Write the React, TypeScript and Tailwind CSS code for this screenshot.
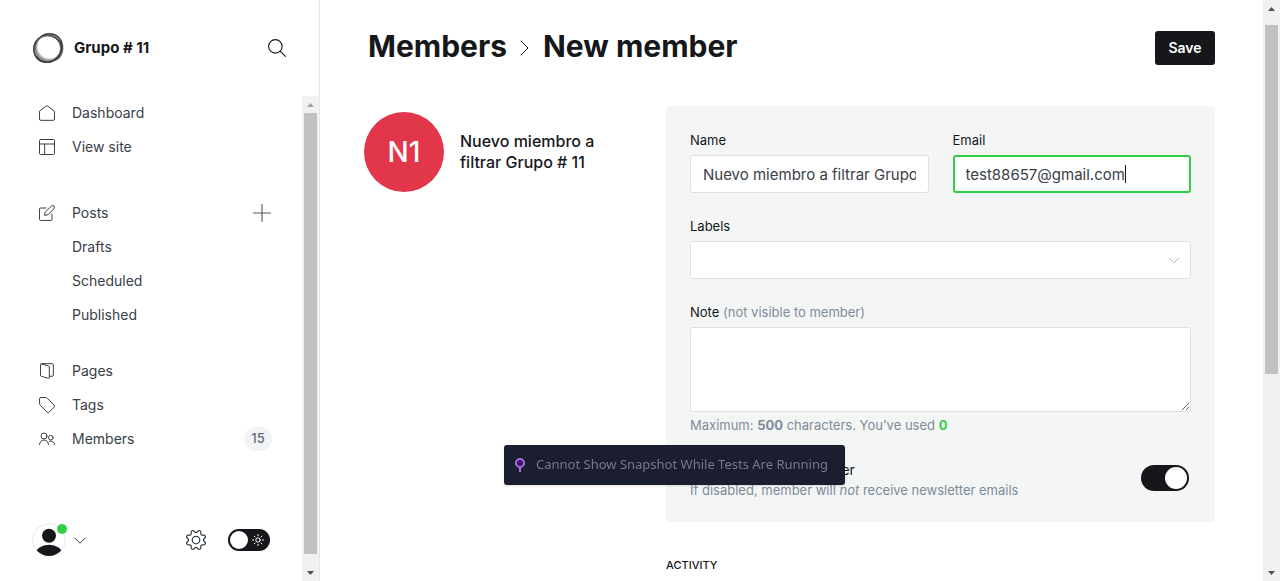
import React, { useEffect, useRef } from 'react';

type IconProps = { className?: string; children: React.ReactNode };

function Icon({ className = '', children }: IconProps) {
  return (
    <svg
      viewBox="0 0 24 24"
      fill="none"
      stroke="currentColor"
      strokeWidth="1.5"
      strokeLinecap="round"
      strokeLinejoin="round"
      aria-hidden="true"
      className={`shrink-0 ${className}`}
    >
      {children}
    </svg>
  );
}

const icons = {
  home: <path d="M.8 9.6V21a2 2 0 0 0 2 2h18.400a2 2 0 0 0 2-2V9.600L13.200 1.700a2 2 0 0 0-2.400 0z" />,
  layout: (
    <>
      <rect x=".75" y=".75" width="22.500" height="22.500" rx="1.500" />
      <path d="M.75 7.500h22.500M8.500 7.500v15.700" />
    </>
  ),
  pen: (
    <>
      <path d="M19.500 13.500v8.200a1.500 1.500 0 0 1-1.500 1.500H2.300a1.500 1.500 0 0 1-1.500-1.500V6a1.500 1.500 0 0 1 1.500-1.500h8.200" />
      <path d="M13.200 14.600 8.300 15.700l1-5L18.600 1.600a2.700 2.700 0 0 1 3.900 3.900z" />
    </>
  ),
  pages: (
    <path d="m3.400 1.300 11 3.200a1.500 1.500 0 0 1 1.100 1.500v15.700a1.200 1.200 0 0 1-1.600 1.200L3.500 20a1.500 1.500 0 0 1-1.200-1.500V2.500A1.500 1.500 0 0 1 3.800 1h16a1.700 1.700 0 0 1 1.700 1.700v15.500a1.700 1.700 0 0 1-1.700 1.700h-4.200" />
  ),
  tag: <path d="M2.300.75h7.800a3 3 0 0 1 2.100.9l10.400 10.400a2.200 2.200 0 0 1 0 3.200l-7.300 7.300a2.200 2.200 0 0 1-3.200 0L1.700 12.200a3 3 0 0 1-.9-2.100V2.300A1.500 1.500 0 0 1 2.300.75z" />,
  members: (
    <>
      <circle cx="7.500" cy="7.500" r="4.500" />
      <path d="M.75 20.300a6.750 6.750 0 0 1 13.500 0" />
      <circle cx="17.700" cy="10.100" r="3.400" />
      <path d="M15.800 15.400a5.250 5.250 0 0 1 7.500 4.900" />
    </>
  ),
};

function NavItem({ icon, label, children }: { icon?: React.ReactNode; label: string; children?: React.ReactNode }) {
  return (
    <li className="flex h-[34px] items-center justify-between">
      <a href="#" className="flex items-center text-sm text-[#394047]">
        <span className="flex w-[33px]">{icon && <Icon className="size-4">{icon}</Icon>}</span>
        {label}
      </a>
      {children}
    </li>
  );
}

function Arrow({ up, className }: { up?: boolean; className: string }) {
  return (
    <span className={`flex h-[17px] shrink-0 items-center justify-center ${className}`}>
      <svg viewBox="0 0 7 4" className="h-1 w-[7px]" fill="currentColor" aria-hidden="true">
        <path d={up ? 'M0 4 3.500 0 7 4z' : 'M0 0h7L3.500 4z'} />
      </svg>
    </span>
  );
}

function Logo() {
  return (
    <svg viewBox="0 0 32 32" className="size-8 shrink-0" fill="none" aria-hidden="true">
      <ellipse cx="17.400" cy="14.800" rx="13" ry="13" stroke="#b5b5b5" strokeWidth="2" />
      <ellipse cx="15.600" cy="16.800" rx="13.800" ry="13.400" stroke="#2b2b2b" strokeWidth="1.500" />
      <ellipse cx="17" cy="15.600" rx="14" ry="13" stroke="#666" strokeWidth="1" transform="rotate(30 16 16)" />
      <ellipse cx="16" cy="16" rx="15" ry="13.100" stroke="#3a3a3a" strokeWidth="1.300" transform="rotate(-48 16 16)" />
      <ellipse cx="15.400" cy="16.300" rx="13.200" ry="12.800" stroke="#666" strokeWidth=".9" />
    </svg>
  );
}

function Sidebar() {
  return (
    <aside className="flex w-80 shrink-0 flex-col border-r border-[#e5e7e9]">
      <div className="flex h-24 shrink-0 items-center justify-between pr-8 pl-8">
        <a href="#" className="flex items-center gap-2.5 text-[15px] font-bold text-[#15171a]">
          <Logo />
          Grupo # 11
        </a>
        <button type="button" aria-label="Search" className="mr-px">
          <Icon className="size-[18px] text-[#15171a]">
            <circle cx="9.800" cy="9.800" r="9" />
            <path d="m16.200 16.200 7 7" />
          </Icon>
        </button>
      </div>
      <div className="flex min-h-0 flex-1">
        <div className="flex min-w-0 flex-1 flex-col justify-between">
          <nav className="pr-[30px] pl-[39px]">
            <ul className="mb-8">
              <NavItem icon={icons.home} label="Dashboard" />
              <NavItem icon={icons.layout} label="View site" />
            </ul>
            <ul className="mb-[22px]">
              <NavItem icon={icons.pen} label="Posts">
                <button type="button" aria-label="New post" className="mr-px">
                  <Icon className="size-[18px] text-[#54595f]">
                    <path d="M12 .7v22.600M.7 12h22.600" />
                  </Icon>
                </button>
              </NavItem>
              <NavItem label="Drafts" />
              <NavItem label="Scheduled" />
              <NavItem label="Published" />
            </ul>
            <ul>
              <NavItem icon={icons.pages} label="Pages" />
              <NavItem icon={icons.tag} label="Tags" />
              <NavItem icon={icons.members} label="Members">
                <span className="flex h-6 w-7 items-center justify-center rounded-full bg-[#f1f3f4] text-[13px] font-medium text-[#626d79]">
                  15
                </span>
              </NavItem>
            </ul>
          </nav>
          <div className="flex items-center justify-between pr-8 pb-6 pl-8">
            <button type="button" aria-label="Account menu" className="flex items-center gap-2">
              <span className="relative">
                <svg viewBox="0 0 34 34" className="size-[34px]" aria-hidden="true">
                  <clipPath id="avatar">
                    <circle cx="17" cy="17" r="16" />
                  </clipPath>
                  <circle cx="17" cy="17" r="16.400" fill="#fff" stroke="#e9ebed" strokeWidth="1" />
                  <g clipPath="url(#avatar)" fill="#15171a">
                    <circle cx="17" cy="12.800" r="7" />
                    <ellipse cx="17" cy="31" rx="13.500" ry="9.300" />
                  </g>
                </svg>
                <span className="absolute top-px -right-px size-2.5 rounded-full bg-[#30cf43]" />
              </span>
              <svg viewBox="0 0 12 7" className="h-[7px] w-3 text-[#394047]" fill="none" stroke="currentColor" aria-hidden="true">
                <path d="m.5.700 5.500 5.500L11.500.7" />
              </svg>
            </button>
            <div className="flex items-center gap-[22px]">
              <button type="button" aria-label="Settings">
                <Icon className="size-5 text-[#394047]">
                  <circle cx="12" cy="12" r="4.500" />
                  <path d="M10.546,2.438a1.957,1.957,0,0,0,2.908,0L14.4,1.4a1.959,1.959,0,0,1,3.41,1.413l-.071,1.4A1.958,1.958,0,0,0,19.79,6.27l1.4-.071A1.959,1.959,0,0,1,22.6,9.608l-1.041.938a1.959,1.959,0,0,0,0,2.908l1.041.94a1.959,1.959,0,0,1-1.413,3.41l-1.4-.071a1.958,1.958,0,0,0-2.056,2.056l.071,1.4A1.959,1.959,0,0,1,14.4,22.6l-.941-1.041a1.959,1.959,0,0,0-2.908,0L9.606,22.6A1.959,1.959,0,0,1,6.2,21.192l.072-1.4a1.958,1.958,0,0,0-2.056-2.056l-1.4.071A1.958,1.958,0,0,1,1.4,14.4l1.041-.94a1.959,1.959,0,0,0,0-2.908L1.4,9.606A1.958,1.958,0,0,1,2.809,6.2l1.4.071A1.958,1.958,0,0,0,6.264,4.211L6.192,2.809A1.959,1.959,0,0,1,9.6,1.4Z" />
                </Icon>
              </button>
              <label className="flex h-[22px] w-[42px] items-center justify-between rounded-full bg-[#15171a] pr-1.5 pl-0.5">
                <input type="checkbox" aria-label="Dark mode" className="sr-only" />
                <span className="size-[18px] rounded-full bg-white" />
                <svg viewBox="0 0 12 12" className="size-3" fill="none" stroke="#fff" strokeLinecap="round" aria-hidden="true">
                  <circle cx="6" cy="6" r="2.200" />
                  <path d="M6 .5v1.200M6 10.300v1.200M.5 6h1.200M10.300 6h1.200M2.100 2.100l.9.900M9 9l.9.900M2.100 9.900 3 9M9 3l.9-.9" />
                </svg>
              </label>
            </div>
          </div>
        </div>
        <div className="flex w-[17px] flex-col bg-[#f1f1f1]" aria-hidden="true">
          <Arrow up className="text-[#a3a3a3]" />
          <div className="flex flex-1 flex-col px-0.5">
            <div className="grow-[441] bg-[#c1c1c1]" />
            <div className="grow-[10]" />
          </div>
          <Arrow className="text-[#505050]" />
        </div>
      </div>
    </aside>
  );
}

const labelClass = 'mb-1 block text-[13px] leading-[21px] text-[#15171a]';
const fieldClass = 'block h-[38px] w-full rounded-[3px] border bg-white px-3 text-[15px] text-[#394047] outline-none';

function MemberForm() {
  const email = useRef<HTMLInputElement>(null);
  useEffect(() => {
    const field = email.current;
    if (!field) return;
    field.focus();
    field.setSelectionRange(field.value.length, field.value.length);
  }, []);

  return (
    <form className="flex flex-col gap-[23px] rounded-[3px] bg-[#f4f6f6] px-6 pt-6 pb-[21px]">
      <div className="grid grid-cols-2 gap-6">
        <div>
          <label htmlFor="name" className={labelClass}>Name</label>
          <input id="name" defaultValue="Nuevo miembro a filtrar Grupo # 11" className={`${fieldClass} border-[#dde1e3]`} />
        </div>
        <div>
          <label htmlFor="email" className={labelClass}>Email</label>
          <div className="relative">
            <input
              id="email"
              ref={email}
              defaultValue="test88657@gmail.com"
              className={`${fieldClass} border-[#dde1e3] caret-transparent focus:border-2 focus:border-[#30cf43] focus:px-[11px]`}
            />
            <span className="pointer-events-none absolute top-2.5 left-[172px] h-[18px] w-px bg-[#15171a]" />
          </div>
        </div>
      </div>
      <div>
        <label htmlFor="labels" className={labelClass}>Labels</label>
        <div className="relative">
          <select id="labels" defaultValue="" className={`${fieldClass} appearance-none border-[#dde1e3]`}>
            <option value="" />
          </select>
          <svg viewBox="0 0 12 7" className="pointer-events-none absolute top-4 right-[11px] h-[7px] w-3 text-[#abb4be]" fill="none" stroke="currentColor" aria-hidden="true">
            <path d="m1 .8 5 5 5-5" />
          </svg>
        </div>
      </div>
      <div>
        <label htmlFor="note" className={labelClass}>
          Note <span className="text-[#7c8b9a]">(not visible to member)</span>
        </label>
        <textarea id="note" className="block h-[85px] w-full resize-y rounded-[3px] border border-[#dde1e3] bg-white px-3 py-2 text-[15px] outline-none" />
        <p className="mt-[3px] text-[13px] leading-[21px] text-[#7c8b9a]">
          Maximum: <b>500</b> characters. You’ve used <b className="text-[#30cf43]">0</b>
        </p>
      </div>
      <label className="flex items-start justify-between pr-0.5">
        <span className="text-[13px] leading-[21px] text-[#7c8b9a]">
          <span className="block text-sm leading-[21px] text-[#15171a]">Subscribed to newsletter</span>
          If disabled, member will <em>not</em> receive newsletter emails
        </span>
        <input type="checkbox" defaultChecked className="peer sr-only" />
        <span className="mt-1.5 flex h-[26px] w-12 items-center rounded-full bg-[#15171a] p-0.5 peer-checked:justify-end">
          <span className="size-[22px] rounded-full bg-white" />
        </span>
      </label>
    </form>
  );
}

export default function App() {
  return (
    <div className="flex h-screen overflow-hidden bg-white font-['Inter',sans-serif] text-[#15171a]">
      <Sidebar />
      <main className="min-w-0 flex-1 overflow-hidden pr-12 pl-11">
        <header className="flex h-24 items-center justify-between pl-1">
          <h1 className="flex items-center pb-1 text-[30px] leading-9 font-bold">
            <a href="#">Members</a>
            <svg viewBox="0 0 9 16" className="mt-1 mr-[14px] ml-[13px] h-4 w-[9px]" fill="none" stroke="currentColor" aria-hidden="true">
              <path d="m1 1 7 7-7 7" />
            </svg>
            New member
          </h1>
          <button type="button" className="h-[34px] min-w-[60px] rounded-[3px] bg-[#15171a] px-3 text-sm font-semibold text-white">
            Save
          </button>
        </header>
        <div className="mt-2.5 grid grid-cols-[302px_minmax(0,1fr)]">
          <section className="flex items-center gap-4 self-start pt-1.5 pr-8">
            <div className="flex size-20 shrink-0 items-center justify-center rounded-full bg-[#e2374b] text-[28px] font-medium text-white">
              N1
            </div>
            <h2 className="text-base leading-[21px] font-medium">Nuevo miembro a filtrar Grupo # 11</h2>
          </section>
          <div>
            <MemberForm />
            <h3 className="mt-[34px] text-[11px] leading-[18px] font-medium">ACTIVITY</h3>
          </div>
        </div>
      </main>
      <div className="flex w-[17px] shrink-0 flex-col bg-[#f1f1f1]" aria-hidden="true">
        <Arrow up className="text-[#505050]" />
        <div className="flex flex-1 flex-col px-0.5">
          <div className="grow-[8]" />
          <div className="grow-[349] bg-[#c1c1c1]" />
          <div className="grow-[190]" />
        </div>
        <Arrow className="text-[#505050]" />
      </div>
      <div
        role="status"
        className="fixed bottom-24 left-[504px] flex h-10 min-w-[341px] items-center gap-[11px] rounded-[3px] bg-[#1b1e2e] px-[11px] font-['Noto_Sans',sans-serif] text-[13px] text-[#747994] shadow"
      >
        <svg viewBox="0 0 10 14" className="h-3.5 w-2.5" fill="none" stroke="#a66ee8" strokeWidth="2" aria-hidden="true">
          <circle cx="5" cy="5" r="4" fill="#3b155f" />
          <path d="M5 9v5" />
        </svg>
        Cannot Show Snapshot While Tests Are Running
      </div>
    </div>
  );
}
